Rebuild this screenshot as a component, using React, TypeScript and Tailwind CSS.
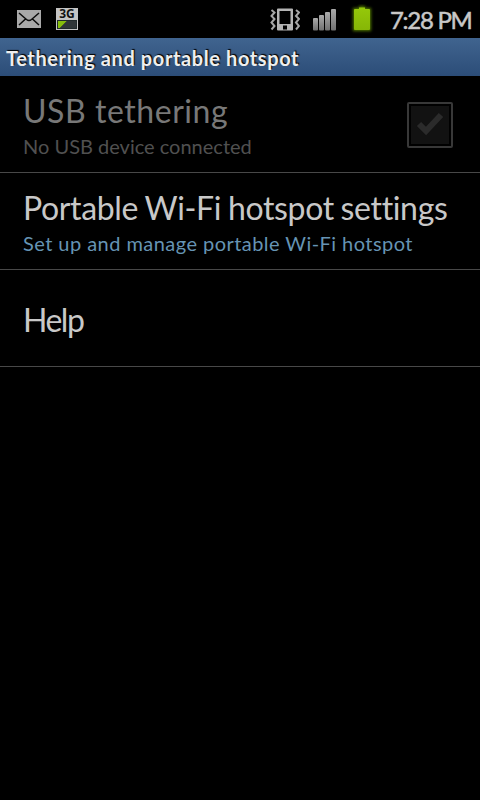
import React from "react";

type RowProps = {
  title: React.ReactNode;
  summary?: React.ReactNode;
  children?: React.ReactNode;
};

const Row = ({ title, summary, children }: RowProps) => (
  <li className="flex h-[97px] items-center justify-between border-b border-[#484848] pt-[2px] pl-[23px] pr-[27px]">
    <div className="whitespace-nowrap pt-[2px]">
      {title}
      {summary}
    </div>
    {children}
  </li>
);

const MailIcon = () => (
  <svg width="24" height="18" viewBox="0 0 24 18">
    <rect width="24" height="18" fill="#a9a9a9" />
    <path d="M2 3l7.5 6.5q2.5 2 5 0L22 3M2 15l6.5-6M22 15l-6.5-6" fill="none" stroke="#0c0c0c" strokeWidth="1.5" />
  </svg>
);

const DataIcon = () => (
  <svg width="22" height="22" viewBox="0 0 22 22" overflow="visible">
    <rect width="22" height="22" fill="#c4c4c4" />
    <text x="11" y="10" textAnchor="middle" fontFamily="Open Sans, sans-serif" fontWeight="700" fontSize="12" fill="#111">
      3G
    </text>
    <rect x="1" y="12" width="20" height="9" fill="#222b2c" />
    <path d="M2 13h9l-7 7H2z" fill="#86bd0c" />
    <path d="M11 13h9v7H4z" fill="#303638" />
  </svg>
);

const VibrateIcon = () => (
  <svg width="30" height="24" viewBox="0 0 30 24" fill="none">
    <path fillRule="evenodd" d="M7 1.500q0-1 1-1h14q1 0 1 1v20q0 1-1 1H8q-1 0-1-1zM9.500 3v13h11V3zM13 17.500v4h4v-4z" fill="#b4b4b4" />
    <path d="M1 2l3 2.500L1 8l3 3-3 3.500 3 3.500-3 3.500" stroke="#a6a6a6" strokeWidth="2" transform="translate(.5)" />
    <path d="M1 2l3 2.500L1 8l3 3-3 3.500 3 3.500-3 3.500" stroke="#a6a6a6" strokeWidth="2" transform="translate(25)" />
  </svg>
);

const SignalIcon = () => (
  <svg width="24" height="22" viewBox="0 0 24 22">
    <defs>
      <linearGradient id="bar" x1="0" y1="0" x2="0" y2="1">
        <stop offset="0" stopColor="#aaa" />
        <stop offset="1" stopColor="#707070" />
      </linearGradient>
    </defs>
    <g fill="url(#bar)">
      <rect x="0" y="9" width="5" height="12.500" rx="1" />
      <rect x="6" y="6" width="5" height="15.500" rx="1" />
      <rect x="12" y="3" width="5" height="18.500" rx="1" />
      <rect x="18" y="0" width="5" height="21.500" rx="1" />
    </g>
  </svg>
);

const BatteryIcon = () => (
  <svg width="26" height="32" viewBox="0 0 26 32">
    <defs>
      <linearGradient id="cell" x1="0" y1="0" x2="0" y2="1">
        <stop offset="0" stopColor="#95c90a" />
        <stop offset="1" stopColor="#86b606" />
      </linearGradient>
      <filter id="glow" x="-30%" y="-30%" width="160%" height="160%">
        <feGaussianBlur stdDeviation="1.6" />
      </filter>
    </defs>
    <path d="M4 4h6V2h6v2h6v23H4z" fill="#527a04" filter="url(#glow)" />
    <path d="M5 6q0-1 1-1h4V3.500h6V5h4q1 0 1 1v19q0 1-1 1H6q-1 0-1-1z" fill="url(#cell)" />
  </svg>
);

const StatusBar = () => (
  <header className="flex h-[38px] items-center justify-between pl-[17px] pr-2">
    <div className="flex items-center gap-[15px]">
      <MailIcon />
      <DataIcon />
    </div>
    <div className="flex items-center pt-px">
      <VibrateIcon />
      <div className="ml-[13px] mr-3">
        <SignalIcon />
      </div>
      <BatteryIcon />
      <span className="ml-[15px] w-[82px] whitespace-nowrap text-2xl leading-[38px] tracking-[-1.3px] text-[#c8c8c8] [-webkit-text-stroke:0.5px_#c8c8c8]">
        7:28 PM
      </span>
    </div>
  </header>
);

const App = () => {
  return (
    <div className="h-[800px] w-[480px] overflow-hidden bg-black font-['Lato',sans-serif] [font-variant-ligatures:none]">
      <StatusBar />
      <h1 className="h-[38px] whitespace-nowrap bg-linear-to-b from-[#40648f] to-[#2c4d78] pl-[6px] text-xl leading-[40px] font-bold tracking-[0.6px] text-[#eee] [text-shadow:1px_-1px_1px_#000]">
        Tethering and portable hotspot
      </h1>
      <ul>
        <Row
          title={<p className="text-[32px] leading-[40px] tracking-[0.55px] text-[#787878]">USB tethering</p>}
          summary={<p className="text-xl leading-[30px] text-[#505050]">No USB device connected</p>}
        >
          <div className="flex size-[46px] items-center justify-center rounded-[2px] border-2 border-[#383838] p-0.5">
            <svg width="38" height="38" viewBox="0 0 38 38">
              <rect width="38" height="38" fill="#121212" />
              <path d="M8 18l7 7 15-16" fill="none" stroke="#2b2b2b" strokeWidth="6" />
            </svg>
          </div>
        </Row>
        <Row
          title={
            <p className="text-[32px] leading-[40px] tracking-[-0.35px] [word-spacing:-1px] text-[#c8c8c8]">
              Portable Wi-Fi hotspot settings
            </p>
          }
          summary={
            <p className="text-xl leading-[30px] tracking-[0.45px] text-[#6694b4]">
              Set up and manage portable Wi-Fi hotspot
            </p>
          }
        />
        <Row title={<p className="text-[32px] leading-[40px] tracking-[-1.5px] text-[#c8c8c8]">Help</p>} />
      </ul>
    </div>
  );
};

export default App;
